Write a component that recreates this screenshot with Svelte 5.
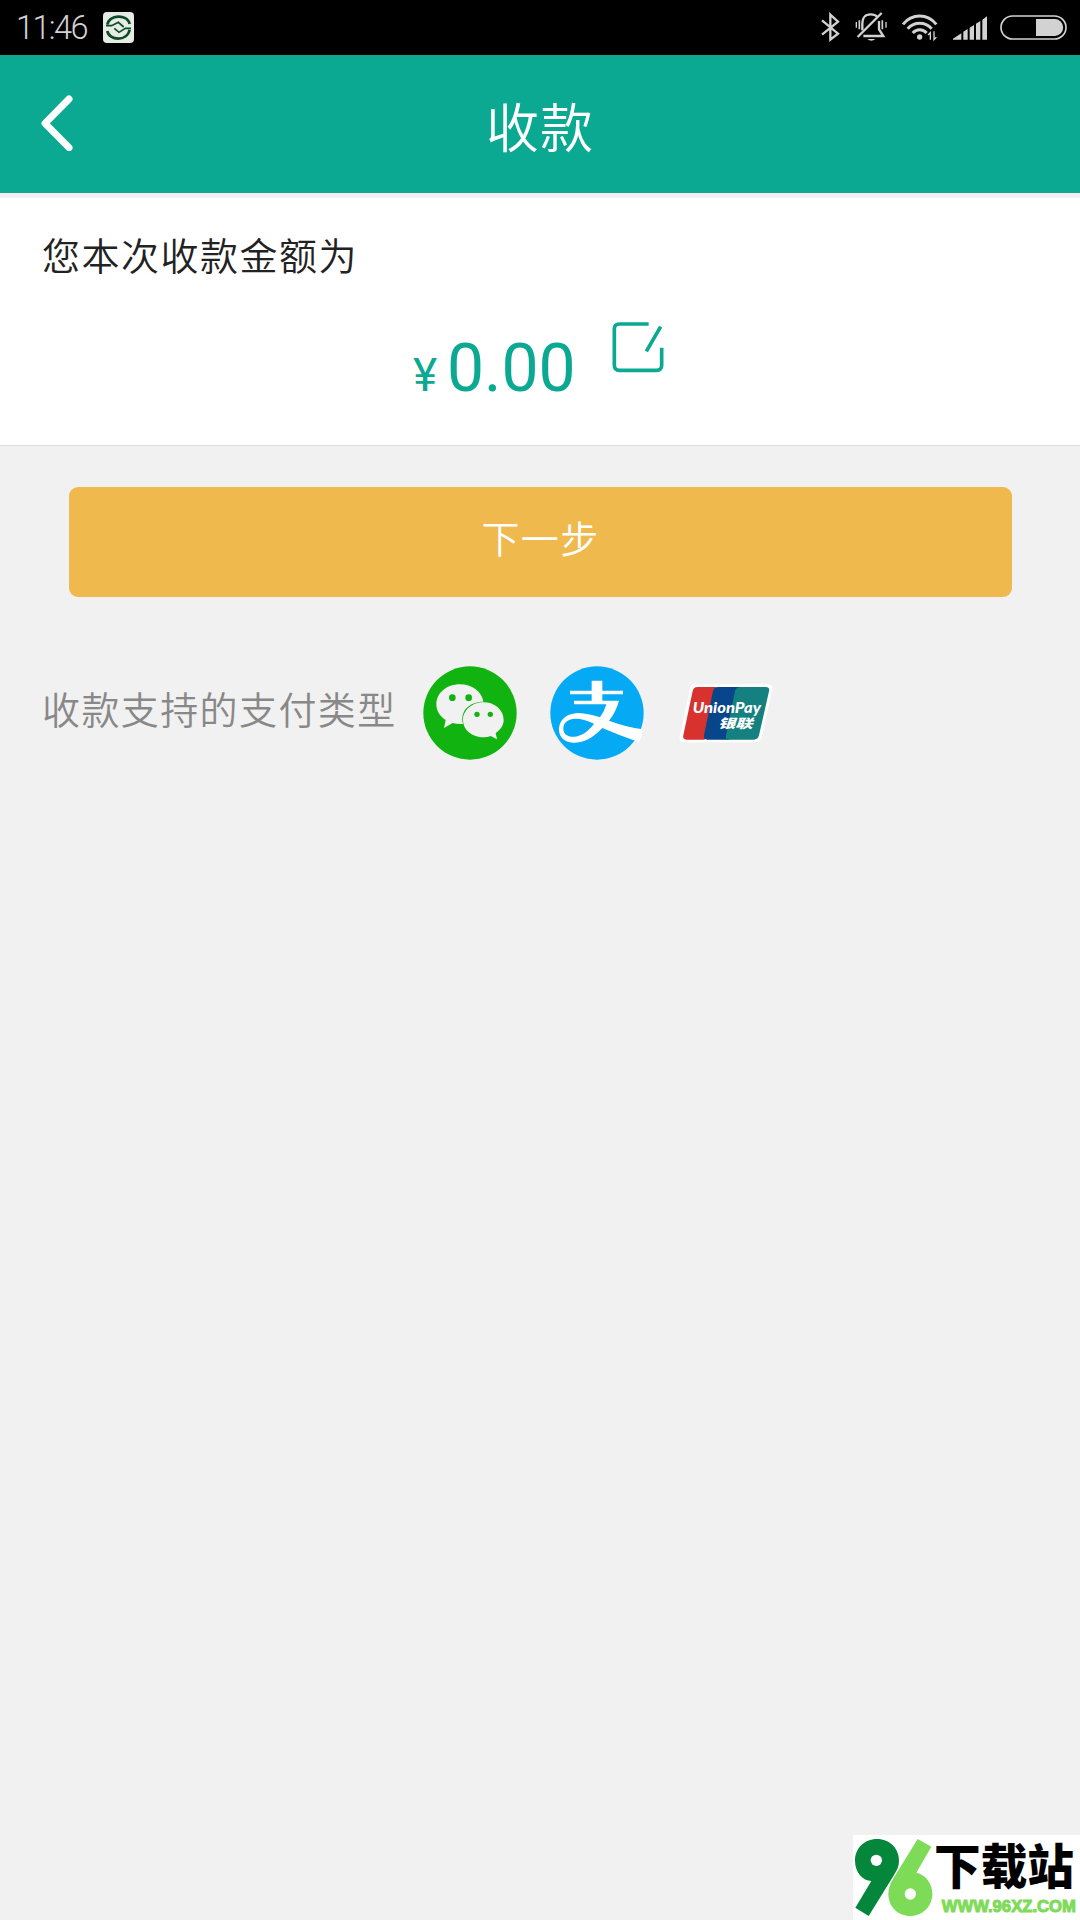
<script lang="ts">
  let time = '11:46';
  let title = '收款';
  let amount = '0.00';
</script>

<div class="screen">
  <div class="status">
    <span class="time">{time}</span>
    <svg class="app" viewBox="0 0 93 93" width="31" height="31">
      <rect width="93" height="93" rx="12" fill="#e6ebe6" />
      <g fill="none" stroke="#0b4a22" stroke-width="8">
        <path d="M13 38C17 8 72 4 80 36" />
        <path d="M13 57C18 86 72 90 80 53" />
      </g>
      <path d="M9 41H26L46 31L62 45M84 49H67L48 61L34 49" fill="none" stroke="#0b4a22" stroke-width="5" />
    </svg>
    <svg class="icons" viewBox="0 0 840 165" width="280" height="55">
      <g fill="none" stroke="#d2d2d2" stroke-width="7">
        <path d="M66 61L114 101L91 119V44L114 65L66 104" />
        <path d="M187 91V74C187 49 196 43 212 43C220 43 228 46 233 51M237 63V88L250 108H190" />
        <path d="M173 111L245 39" />
        <path d="M178 61V88M247 61V88" stroke-width="5" />
        <path d="M169 66V83M258 66V83" stroke-width="4" />
        <path d="M309 73C336 40 382 40 409 73" stroke-width="9" />
        <path d="M323 86C343 64 375 64 395 86" stroke-width="9" />
        <path d="M338 99C350 86 368 86 380 99" stroke-width="9" />
        <path d="M391 119V98L384 105M402 94V119L409 112" stroke-width="4" />
        <rect x="603" y="48" width="195" height="69" rx="34.500" stroke-width="5" />
      </g>
      <g fill="#d2d2d2">
        <path d="M202 117H226Q214 128 202 117Z" />
        <circle cx="359" cy="111" r="8" />
        <path d="M459 119V116L484 100V119ZM490 119V95L503 87V119ZM509 119V83L522 75V119ZM528 119V71L541 63V119ZM547 119V59L561 49V119Z" />
        <path d="M708 57H764A25 25 0 0 1 764 108H708Z" />
      </g>
    </svg>
  </div>

  <header>
    <svg class="back" viewBox="0 0 96 168" width="32" height="56">
      <path d="M84 12L12 85L84 158" />
    </svg>
    <h1>{title}</h1>
  </header>

  <section class="card">
    <p>您本次收款金额为</p>
    <div class="amount">
      <span class="yen">¥</span>
      <span class="value">{amount}</span>
      <svg viewBox="0 0 156 156" width="52" height="52">
        <path d="M110 6H22Q7 6 7 21V130Q7 145 22 145H134Q149 145 149 130V77M146 14L103 88" />
      </svg>
    </div>
  </section>

  <button>下一步</button>

  <div class="types">
    <span>收款支持的支付类型</span>
    <svg viewBox="70 77 282 282" width="94" height="94">
      <circle cx="211" cy="218" r="140" fill="#10b30f" />
      <path d="M181 132C141 132 110 158 110 192C110 211 120 228 138 239L133 263L159 248Q171 252 190 251C180 212 209 184 251 184C246 153 216 132 181 132Z" fill="#f1f1f1" />
      <path d="M252 186C218 186 190 209 190 239C190 269 218 291 252 291Q264 291 273 287L292 297L288 278C303 268 312 255 312 239C312 209 285 186 252 186Z" fill="#f1f1f1" />
      <g fill="#10b30f">
        <circle cx="158" cy="172" r="10" />
        <circle cx="207" cy="172" r="10" />
        <circle cx="232" cy="222" r="8" />
        <circle cx="272" cy="222" r="8" />
      </g>
    </svg>
    <svg class="alipay" viewBox="450 77 282 282" width="94" height="94">
      <circle cx="591" cy="218" r="140" fill="#06a9f3" />
      <path d="M575 121H607V151H669V162H607V181H657Q648 215 627 241Q668 257 727 267Q727 287 718 306Q660 286 607 263C575 298 542 309 517 307C487 304 475 284 477 263C480 232 508 218 537 218Q562 219 600 231Q613 214 619 192H522V181H575V162H510V151H575Z" fill="#fff" />
      <path d="M582 250Q550 235 528 235C502 235 490 248 490 265C490 281 503 290 522 289C544 288 566 272 582 250Z" fill="#06a9f3" />
    </svg>
    <svg class="union" viewBox="837 130 282 177" width="94" height="59">
      <path d="M886 131H1103Q1120 131 1116 148L1085 290Q1081 305 1065 305H852Q835 305 839 289L869 147Q873 131 886 131Z" fill="#fff" />
      <path d="M892 139H948L914 297H860Q847 297 850 284L878 151Q881 139 892 139Z" fill="#d8322f" />
      <path d="M954 139H1024L986 297H922Q909 297 912 284L939 151Q942 139 954 139Z" fill="#07468a" />
      <path d="M1023 139H1097Q1110 139 1107 152L1077 284Q1074 297 1061 297H980Q976 294 978 284L1005 151Q1008 139 1023 139Z" fill="#14807f" />
      <text x="878" y="216" class="pay" textLength="205" lengthAdjust="spacingAndGlyphs">UnionPay</text>
      <text x="954" y="262" class="yl" textLength="104" lengthAdjust="spacingAndGlyphs">银联</text>
    </svg>
  </div>

  <svg class="mark" viewBox="39 45 681 255" width="227" height="85">
    <rect x="39" y="45" width="681" height="255" fill="#fff" />
    <path d="M111 57C72 57 45 86 45 122C45 157 68 182 94 183L46 263L86 288L162 165C172 149 177 138 177 122C177 86 150 57 111 57Z" fill="#05873b" />
    <path d="M233 57L274 80L229 158C257 164 277 190 277 222C277 259 248 288 211 288C174 288 145 260 145 222C145 205 151 190 159 177Z" fill="#7edb58" />
    <circle cx="109" cy="121" r="17" fill="#fff" />
    <circle cx="211" cy="222" r="17" fill="#fff" />
    <text x="282" y="192" class="site" textLength="420" lengthAdjust="spacingAndGlyphs">下载站</text>
    <text x="305" y="275" class="url" textLength="403" lengthAdjust="spacingAndGlyphs">WWW.96XZ.COM</text>
  </svg>
</div>

<style>
  :global(body) {
    background: #f1f1f1;
  }

  .screen {
    display: flex;
    flex-direction: column;
    width: 1080px;
    height: 1920px;
    overflow: hidden;
    font-family: Roboto, 'Noto Sans CJK SC', sans-serif;
    font-weight: 350;
  }

  .status {
    display: flex;
    align-items: center;
    height: 55px;
    box-sizing: border-box;
    padding-left: 16px;
    background: #000;
    color: #d2d2d2;
  }

  .time {
    width: 87px;
    font-family: Roboto, sans-serif;
    font-size: 32.5px;
    font-weight: 350;
    letter-spacing: -1.6px;
    line-height: 55px;
    white-space: nowrap;
    padding-top: 2px;
  }

  .icons {
    margin-left: auto;
  }

  header {
    display: grid;
    grid-template-columns: 120px 1fr 120px;
    align-items: center;
    height: 138px;
    background: #0ba991;
    border-bottom: 5px solid #f1eff2;
  }

  .back {
    margin: -2px 0 0 41px;
    fill: none;
    stroke: #fff;
    stroke-width: 21;
    stroke-linecap: round;
    stroke-linejoin: round;
  }

  h1 {
    margin: 0;
    padding-top: 2px;
    color: #fff;
    font-family: 'Noto Sans CJK SC', sans-serif;
    font-size: 53px;
    font-weight: 350;
    line-height: 76px;
    letter-spacing: 1px;
    text-align: center;
  }

  .card {
    height: 247px;
    background: #fff;
    border-bottom: 1px solid #dcdcdc;
  }

  p {
    margin: 0;
    padding: 29px 0 3px 42px;
    color: #222;
    font-family: 'Noto Sans CJK SC', sans-serif;
    font-size: 38px;
    line-height: 54px;
    letter-spacing: 1.5px;
  }

  .amount {
    display: flex;
    align-items: baseline;
    height: 120px;
    padding: 34px 0 0 413px;
    box-sizing: border-box;
    color: #0ba991;
    font-weight: 400;
    line-height: 101px;
  }

  .yen {
    width: 34px;
    font-size: 46px;
  }

  .value {
    width: 165px;
    font-size: 66px;
  }

  .amount svg {
    align-self: flex-start;
    margin-top: 4px;
    fill: none;
    stroke: #0ba991;
    stroke-width: 11;
  }

  button {
    width: 943px;
    height: 110px;
    margin: 41px 0 0 69px;
    padding: 0 0 12px;
    border: 0;
    border-radius: 9px;
    background: #f0b94e;
    color: #fff;
    font: 350 38px 'Noto Sans CJK SC', sans-serif;
    letter-spacing: 1.4px;
  }

  .types {
    display: flex;
    align-items: center;
    height: 94px;
    margin-top: 69px;
    padding-left: 42px;
  }

  .types span {
    width: 381px;
    color: #888;
    font-family: 'Noto Sans CJK SC', sans-serif;
    font-size: 38px;
    line-height: 54px;
    letter-spacing: 1.4px;
    white-space: nowrap;
    margin-top: -10px;
  }

  .alipay {
    margin-left: 33px;
  }

  .union {
    margin-left: 35px;
  }

  .pay {
    fill: #fff;
    font: italic 900 46px Lato, sans-serif;
  }

  .yl {
    fill: #fff;
    font: italic 900 38px 'Noto Sans CJK SC', sans-serif;
  }

  .mark {
    margin: auto 0 0 auto;
    overflow: visible;
  }

  .site {
    fill: #000;
    font: 900 144px 'Noto Sans CJK SC', sans-serif;
  }

  .url {
    fill: #7edb58;
    stroke: #7edb58;
    stroke-width: 3;
    font: 700 50px 'Liberation Sans', sans-serif;
  }
</style>
